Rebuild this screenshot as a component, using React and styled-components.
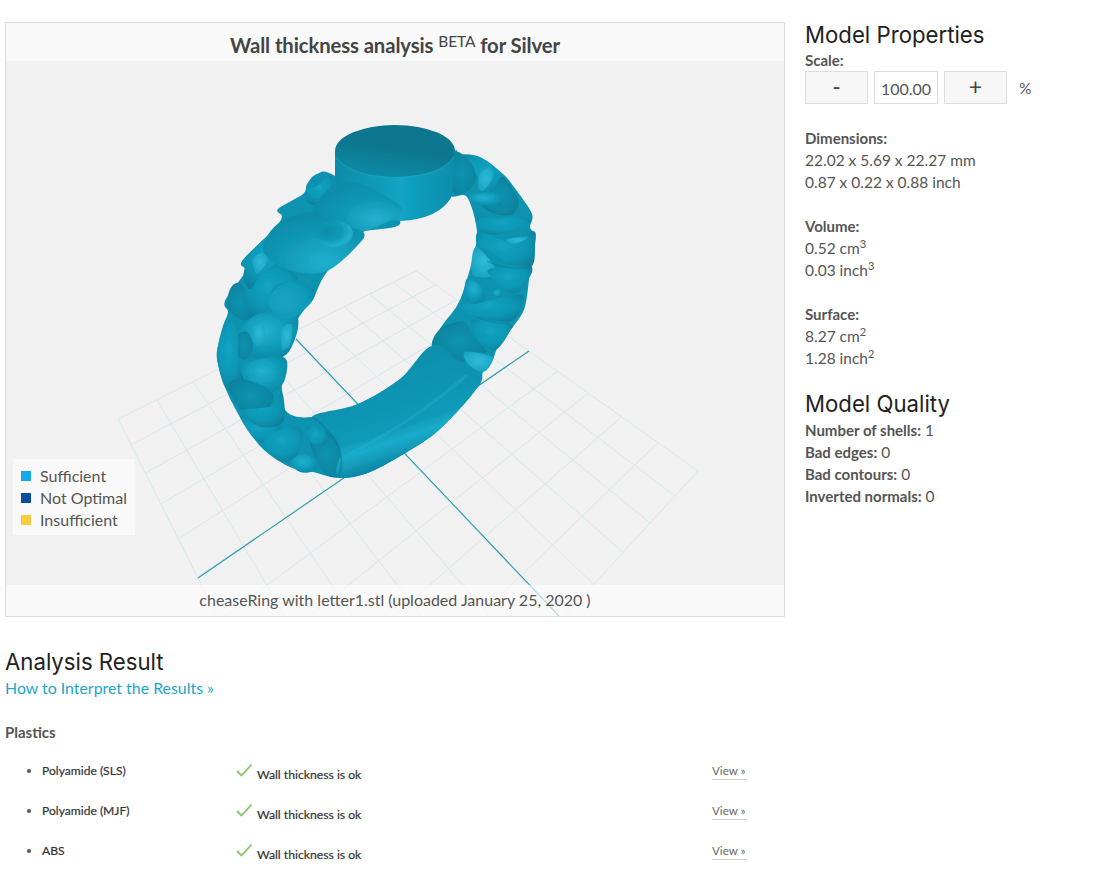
import React from 'react';
import styled, { createGlobalStyle } from 'styled-components';

const Global = createGlobalStyle`
  html, body { margin: 0; padding: 0; background: #fff; overflow: hidden; }
  body { font-family: Lato, "Liberation Sans", sans-serif; color: #444; }
`;
const Page = styled.div`
  display: flex; align-items: flex-start; gap: 20px;
  padding: 22px 0 0 5px; height: 847px; overflow: hidden;
`;
const Main = styled.main`width: 780px; flex: none;`;
const Side = styled.aside`width: 270px; flex: none; margin-top: -2px;`;
const Panel = styled.section`
  position: relative; height: 595px; box-sizing: border-box; overflow: hidden;
  display: flex; flex-direction: column;
  background: #f1f1f1; border: 1px solid #ddd; border-top-color: #dcdcdc;
`;
const Title = styled.h1`
  margin: 0; height: 38px; flex: none; text-align: center;
  background: #f9f9f9; color: #444; font: 700 20.3px/44px Lato, sans-serif; letter-spacing: -.1px;
  position: relative; z-index: 1;
  sup { font-size: 15.5px; font-weight: 400; line-height: 0; vertical-align: 6px; }
`;
const Stage = styled.div`flex: 1; position: relative; min-height: 0;`;
const Drawing = styled.svg`display: block; width: 778px; height: 523px; overflow: visible;`;
const Legend = styled.ul`
  position: absolute; left: 7px; top: 398px; width: 122px; height: 76px; margin: 0; padding: 6px 0 0 8px;
  box-sizing: border-box; list-style: none; background: #f9f9f9;
`;
const LegendItem = styled.li`
  display: flex; align-items: center; gap: 9px; height: 22px;
  font: 400 16px/22px Lato, sans-serif; color: #555;
  &::before { content: ""; width: 10px; height: 10px; background: ${p => p.$c}; }
`;
const Caption = styled.div`
  flex: none; height: 31px; position: relative; z-index: 1; text-align: center;
  background: rgba(255,255,255,.6); color: #555; font: 400 16px/30px Lato, sans-serif;
`;
const Heading = styled.h2`
  margin: 0; font: 400 22.2px/30px Inter, sans-serif; color: #222; height: 30px;
`;
const Link = styled.a`
  display: block; color: #1ca5cc; font: 400 15.9px/22px Lato, sans-serif; text-decoration: none;
`;
const Results = styled.div`padding-top: 22px;`;
const Group = styled.h3`margin: 0 0 20px; font: 700 15px/22px Lato, sans-serif; color: #555;`;
const Row = styled.div`
  display: grid; grid-template-columns: 231px 476px 1fr; height: 40px; align-items: start;
`;
const Material = styled.div`
  display: flex; font: 400 12.1px/16px Lato, sans-serif; color: #333; padding-left: 22px;
  -webkit-text-stroke: .2px #333;
  &::before { content: ""; width: 4px; height: 4px; border-radius: 50%; background: #555; margin: 6px 11px 0 0; }
`;
const Status = styled.div`
  display: flex; align-items: flex-start; gap: 5px; font: 400 12.2px/16px Lato, sans-serif; color: #333;
  -webkit-text-stroke: .2px #333;
  span { margin-top: 4px; }
  svg { flex: none; margin-top: -1px; }
`;
const View = styled.a`
  display: block; width: 35px; margin-top: -1px; font: 400 11.6px/17px Lato, sans-serif; color: #666; border-bottom: 1px solid #ccc;
`;
const Label = styled.div`font: 700 15px/${p => p.$lh || 22}px Lato, sans-serif; color: #555;`;
const Line = styled.div`
  font: 400 15.5px/22px Lato, sans-serif; color: #555;
  b { font-weight: 700; font-size: 15px; }
  sup { font-size: 11px; line-height: 0; }
`;
const Block = styled.div`margin-top: ${p => p.$top || 0}px;`;
const Scale = styled.div`display: flex; align-items: center; gap: 6px; height: 33px;`;
const ScaleButton = styled.div`
  width: 63px; height: 33px; box-sizing: border-box; text-align: center;
  background: #f7f7f7; border: 1px solid #ddd; font: 400 23px/29px Lato, sans-serif; color: #444;
`;
const ScaleInput = styled.div`
  width: 64px; height: 33px; box-sizing: border-box; text-align: center;
  background: #fff; border: 1px solid #ddd; font: 400 16px/33px Lato, sans-serif; color: #555;
`;
const Percent = styled.span`margin-left: 6px; font: 400 15.5px/30px Lato, sans-serif; color: #555;`;

const smooth = pts => {
  const n = pts.length; const p = i => pts[(i + n) % n];
  let d = `M${p(0)[0]} ${p(0)[1]}`;
  for (let i = 0; i < n; i++) {
    const a = p(i - 1), b = p(i), c = p(i + 1), e = p(i + 2);
    d += `C${(b[0] + (c[0] - a[0]) / 6).toFixed(1)} ${(b[1] + (c[1] - a[1]) / 6).toFixed(1)} ${(c[0] - (e[0] - b[0]) / 6).toFixed(1)} ${(c[1] - (e[1] - b[1]) / 6).toFixed(1)} ${c[0]} ${c[1]}`;
  }
  return d + 'Z';
};

const quad = [[416, 272], [698, 472], [340, 861], [118, 420]];
const grid = (() => {
  const [[x0, y0], [x1, y1], [x2, y2], [x3, y3]] = quad;
  const sx = x0 - x1 + x2 - x3, sy = y0 - y1 + y2 - y3;
  const dx1 = x1 - x2, dx2 = x3 - x2, dy1 = y1 - y2, dy2 = y3 - y2;
  const det = dx1 * dy2 - dx2 * dy1;
  const g = (sx * dy2 - dx2 * sy) / det, h = (dx1 * sy - sx * dy1) / det;
  const a = x1 - x0 + g * x1, b = x3 - x0 + h * x3, d = y1 - y0 + g * y1, e = y3 - y0 + h * y3;
  const map = (u, v) => {
    const w = g * u + h * v + 1;
    return [((a * u + b * v + x0) / w).toFixed(1), ((d * u + e * v + y0) / w).toFixed(1)];
  };
  const out = [];
  const N = 10;
  for (let i = 0; i <= N; i++) {
    out.push([map(i / N, 0), map(i / N, 1)]);
    out.push([map(0, i / N), map(1, i / N)]);
  }
  return out;
})();

const silhouette = [[335,177],[317,175],[307,185],[303,195],[278,210],[282,218],[272,232],[242,262],[245,273],[225,302],[228,313],[223,327],[218,347],[218,365],[227,393],[243,423],[263,450],[290,468],[313,473],[340,479],[370,473],[407,453],[440,430],[478,388],[483,373],[492,363],[497,350],[510,332],[523,313],[527,297],[530,272],[535,245],[535,235],[530,228],[532,215],[517,192],[503,175],[480,158],[460,155],[455,153],[450,195],[467,198],[477,232],[473,258],[467,280],[458,305],[440,330],[435,348],[400,380],[358,405],[312,418],[287,413],[282,390],[283,358],[298,320],[313,300],[327,273],[360,243],[363,233],[400,222]];

const lumps = [
  ['m', [[318,186],[330,176],[336,190],[328,204],[310,205],[306,192]]],
  ['d', [[232,287],[243,287],[252,317],[240,320],[227,307]]],
  ['m', [[252,317],[245,293],[258,277],[282,267],[298,280],[275,287],[268,307],[265,315]]],
  ['m', [[244,272],[262,242],[283,236],[290,252],[262,275],[250,290]]],
  ['h', [[253,260],[265,253],[267,262],[257,275]]],
  ['l', [[238,337],[252,318],[272,313],[288,320],[298,320],[295,340],[282,358],[248,357]]],
  ['h', [[252,330],[262,325],[266,340],[256,346]]],
  ['h', [[282,330],[292,326],[290,345],[282,350]]],
  ['l2', [[268,300],[282,285],[302,285],[315,293],[308,307],[288,320],[273,313]]],
  ['d', [[236,338],[247,333],[253,348],[246,360],[238,356]]],
  ['m', [[230,323],[238,337],[238,362],[243,380],[227,390],[218,365],[218,347]]],
  ['l', [[242,367],[283,358],[285,380],[273,393],[253,390]]],
  ['d', [[228,387],[243,380],[272,393],[267,410],[243,412]]],
  ['m', [[242,412],[272,407],[282,393],[283,423],[260,428]]],
  ['m', [[240,417],[260,428],[280,428],[275,440],[257,442]]],
  ['m', [[263,443],[287,428],[303,433],[297,457],[280,462]]],
  ['d', [[310,440],[330,433],[343,460],[340,477],[323,473]]],
  ['l', [[290,463],[303,455],[318,463],[313,472],[300,473]]],
  ['m', [[306,428],[322,430],[327,443],[314,447]]],
  ['m', [[463,157],[483,160],[503,177],[510,190],[495,195],[477,177]]],
  ['h', [[480,175],[490,168],[493,178],[483,192],[478,187]]],
  ['d', [[483,207],[497,215],[513,215],[518,200],[503,178],[494,190]]],
  ['l', [[468,197],[490,193],[502,197],[500,207],[480,205]]],
  ['m', [[477,217],[497,220],[517,217],[531,223],[500,235],[480,232]]],
  ['m', [[480,232],[507,242],[533,232],[535,245],[532,267],[513,268],[490,252],[477,245]]],
  ['h', [[507,240],[528,238],[515,245]]],
  ['h', [[476,248],[497,274],[473,276]]],
  ['m', [[490,270],[530,267],[527,283],[517,293],[507,293],[493,280]]],
  ['m', [[458,305],[473,305],[510,297],[523,297],[520,313],[507,323],[473,317]]],
  ['l', [[467,280],[480,287],[485,300],[473,305],[465,297]]],
  ['l', [[492,293],[500,290],[502,297],[495,298]]],
  ['m', [[475,320],[510,325],[510,332],[497,350],[485,347],[473,330]]],
  ['d', [[440,330],[463,323],[473,337],[487,353],[467,353],[463,363],[433,350]]],
  ['h', [[465,353],[490,357],[492,363],[483,373],[468,365]]],
];

const App = () => (
  <Page>
    <Global />
    <Main>
      <Panel>
        <Title>Wall thickness analysis <sup>BETA</sup> for Silver</Title>
        <Stage>
          <Drawing viewBox="0 0 778 523">
            <defs>
              <radialGradient id="l" cx=".45" cy=".4" r=".65"><stop offset="0" stopColor="#22b2d0" /><stop offset=".55" stopColor="#109cba" /><stop offset="1" stopColor="#0a86a3" /></radialGradient>
              <radialGradient id="l2" cx=".35" cy=".5" r=".7"><stop offset="0" stopColor="#15a4c3" /><stop offset=".7" stopColor="#109cba" /><stop offset="1" stopColor="#0a88a5" /></radialGradient>
              <radialGradient id="m" cx=".45" cy=".4" r=".65"><stop offset="0" stopColor="#13a3c2" /><stop offset=".6" stopColor="#0e97b5" /><stop offset="1" stopColor="#0a809c" /></radialGradient>
              <radialGradient id="d" cx=".5" cy=".5" r=".65"><stop offset="0" stopColor="#0d94b2" /><stop offset="1" stopColor="#097f99" /></radialGradient>
              <radialGradient id="h" cx=".5" cy=".45" r=".6"><stop offset="0" stopColor="#30bbd8" /><stop offset="1" stopColor="#16a3c2" /></radialGradient>
              <radialGradient id="nub" cx=".3" cy=".35" r=".8"><stop offset="0" stopColor="#0c8ca8" /><stop offset=".5" stopColor="#0f9ab8" /><stop offset=".8" stopColor="#22b0ce" /><stop offset="1" stopColor="#119cba" /></radialGradient>
              <linearGradient id="cyl" x1="0" x2="1" y1="0" y2="0"><stop offset="0" stopColor="#0b8ba7" /><stop offset=".55" stopColor="#12a4c3" /><stop offset="1" stopColor="#0c8dab" /></linearGradient>
              <linearGradient id="top" x1=".1" x2=".45" y1="1" y2="0"><stop offset="0" stopColor="#0c8ea9" /><stop offset=".6" stopColor="#07778f" /><stop offset="1" stopColor="#07778f" /></linearGradient>
              <linearGradient id="band" x1=".35" x2=".6" y1=".25" y2=".85"><stop offset="0" stopColor="#0c90ae" /><stop offset=".62" stopColor="#0f9ab8" /><stop offset=".76" stopColor="#1aaccb" /><stop offset="1" stopColor="#0b86a3" /></linearGradient>
              <radialGradient id="sh1" cx=".7" cy=".75" r=".7"><stop offset="0" stopColor="#25b2d0" /><stop offset=".5" stopColor="#1099b7" /><stop offset="1" stopColor="#0c8daa" /></radialGradient>
              <radialGradient id="sh2" cx=".6" cy=".8" r=".8"><stop offset="0" stopColor="#1fafce" /><stop offset=".6" stopColor="#0e96b4" /><stop offset="1" stopColor="#0b8aa7" /></radialGradient>
              <filter id="soft" x="-5%" y="-5%" width="110%" height="110%"><feGaussianBlur stdDeviation=".55" /></filter>
            </defs>
            <g transform="translate(-6 -62)">
              <g stroke="#d6e7eb" strokeWidth="1" fill="none">
                {grid.map(([a, b], i) => <line key={i} x1={a[0]} y1={a[1]} x2={b[0]} y2={b[1]} />)}
              </g>
              <g stroke="#2b9bb0" strokeWidth="1.1">
                <line x1="198" y1="579" x2="529" y2="352" />
                <line x1="296" y1="340" x2="560" y2="618" />
              </g>
              <g filter="url(#soft)">
                <path d={smooth(silhouette)} fill="#0d92b0" />
                {lumps.map(([g, pts], i) => <path key={i} d={smooth(pts)} fill={`url(#${g})`} />)}
                <path d={smooth([[455,153],[470,163],[476,178],[470,190],[455,195],[449,176]])} fill="url(#d)" />
                <path d="M335 152V180Q330 200 345 208Q370 222 400 222Q440 220 452 197L455 152Z" fill="url(#cyl)" />
                <path d={smooth([[313,213],[333,185],[347,182],[373,190],[400,207],[397,217],[363,232],[333,223]])} fill="url(#sh1)" />
                <path d={smooth([[263,247],[280,223],[313,213],[333,223],[363,233],[357,247],[327,272],[297,273],[273,263]])} fill="url(#sh2)" />
                <ellipse cx="335" cy="235" rx="18" ry="13" fill="url(#nub)" />
                <ellipse cx="395" cy="152" rx="60" ry="26" fill="url(#top)" />
                <path d="M336 158Q350 178 395 178.500Q440 178 454 158" stroke="#1cabc9" strokeWidth="1.500" fill="none" opacity=".4" />
                <path d={smooth([[312,418],[358,405],[400,380],[435,346],[470,378],[476,390],[440,430],[407,453],[370,473],[345,479],[336,474],[340,455],[336,438]])} fill="url(#band)" />
                <path d="M349 455Q410 425 467 376" stroke="#2ab6d4" strokeWidth="3" fill="none" opacity=".3" />
                <path d="M312 418Q325 425 338 447Q345 465 338 478" stroke="#0a7d97" strokeWidth="2" fill="none" opacity=".6" />
                <path d="M503 178Q520 200 512 215Q495 218 483 207M487 262Q505 272 532 268M477 318Q495 326 510 324M440 330Q455 324 463 323" stroke="#0a7d97" strokeWidth="1.300" fill="none" opacity=".6" />
              </g>
            </g>
          </Drawing>
          <Legend>
            <LegendItem $c="#17a9e6">Sufficient</LegendItem>
            <LegendItem $c="#0a4f9c">Not Optimal</LegendItem>
            <LegendItem $c="#fbcc3e">Insufficient</LegendItem>
          </Legend>
        </Stage>
        <Caption>cheaseRing with letter1.stl (uploaded January 25, 2020 )</Caption>
      </Panel>
      <Block $top={30}>
        <Heading>Analysis Result</Heading>
        <Link>How to Interpret the Results »</Link>
        <Results>
          <Group>Plastics</Group>
          {['Polyamide (SLS)', 'Polyamide (MJF)', 'ABS'].map(name => (
            <Row key={name}>
              <Material>{name}</Material>
              <Status>
                <svg width="16" height="16" viewBox="0 0 16 16" fill="none"><path d="M1 9l4.500 4.500L15.500 2.500" stroke="#84c46c" strokeWidth="1.800" /></svg>
                <span>Wall thickness is ok</span>
              </Status>
              <View>View »</View>
            </Row>
          ))}
        </Results>
      </Block>
    </Main>
    <Side>
      <Heading>Model Properties</Heading>
      <Label $lh={21}>Scale:</Label>
      <Scale>
        <ScaleButton>-</ScaleButton>
        <ScaleInput>100.00</ScaleInput>
        <ScaleButton>+</ScaleButton>
        <Percent>%</Percent>
      </Scale>
      <Block $top={23}>
        <Label>Dimensions:</Label>
        <Line>22.02 x 5.69 x 22.27 mm</Line>
        <Line>0.87 x 0.22 x 0.88 inch</Line>
      </Block>
      <Block $top={22}>
        <Label>Volume:</Label>
        <Line>0.52 cm<sup>3</sup></Line>
        <Line>0.03 inch<sup>3</sup></Line>
      </Block>
      <Block $top={22}>
        <Label>Surface:</Label>
        <Line>8.27 cm<sup>2</sup></Line>
        <Line>1.28 inch<sup>2</sup></Line>
      </Block>
      <Block $top={20}>
        <Heading>Model Quality</Heading>
        <Line><b>Number of shells:</b> 1</Line>
        <Line><b>Bad edges:</b> 0</Line>
        <Line><b>Bad contours:</b> 0</Line>
        <Line><b>Inverted normals:</b> 0</Line>
      </Block>
    </Side>
  </Page>
);
export default App;
